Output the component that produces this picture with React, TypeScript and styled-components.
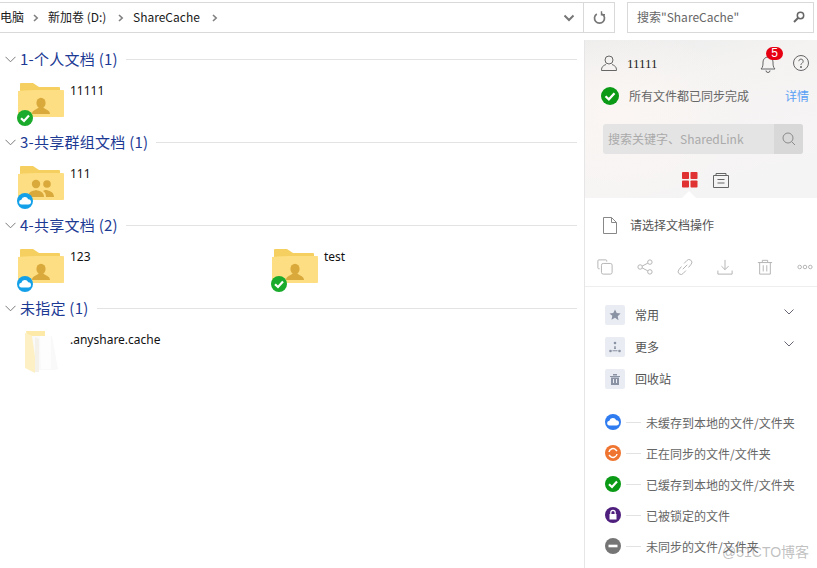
import React from "react";
import styled, { createGlobalStyle } from "styled-components";

const Global = createGlobalStyle`
  html, body { margin: 0; padding: 0; width: 817px; height: 568px; overflow: hidden; background: #fff; }
  body { font-family: "Noto Sans CJK SC", "Noto Sans", sans-serif; }
  * { box-sizing: border-box; }
`;
const CJK = `"Noto Sans CJK SC", "Noto Sans", sans-serif`;
const UI = `"Noto Sans", "Noto Sans CJK SC", sans-serif`;

const Page = styled.div`
  position: relative; width: 817px; height: 568px; overflow: hidden;
  display: flex; flex-direction: column;
`;
const TopBar = styled.div`
  height: 40px; padding-top: 2px; display: flex; align-items: flex-start; flex: none;
`;
const AddressBox = styled.div`
  width: 585px; height: 31px; margin-left: -1px; border: 1px solid #d9d9d9; border-left: none;
  display: flex; align-items: center; font-family: ${CJK}; font-size: 12px; color: #1a1a1a;
  padding: 0 0 2px 1px;
`;
const Crumb = styled.span<{ $w: number }>`
  width: ${p => p.$w}px; flex: none; white-space: nowrap;
`;
const Sep = styled.svg`
  flex: none; width: 6px; height: 8px; margin: 2px 9px 0 0; fill: none; stroke: #808080; stroke-width: 1.6;
`;
const AddressFill = styled.div`flex: 1;`;
const DropBtn = styled.div`
  width: 29px; display: flex; align-items: center; justify-content: center; padding-top: 2px;
`;
const RefreshBtn = styled.div`
  width: 31px; height: 31px; border: 1px solid #d9d9d9; border-left: none; padding-left: 1px;
  display: flex; align-items: center; justify-content: center;
`;
const SearchBox = styled.div`
  margin-left: 12px; width: 187px; height: 31px; border: 1px solid #d9d9d9;
  display: flex; align-items: center; justify-content: space-between; padding: 0 8px 2px 9px;
  font-family: ${CJK}; font-size: 12px; color: #666;
`;
const Body = styled.div`flex: 1; display: flex; min-height: 0;`;
const Left = styled.div`width: 584px; flex: none; display: flex; flex-direction: column; padding-top: 8px;`;
const Group = styled.section`height: 83px; flex: none;`;
const GroupHead = styled.div`
  height: 22px; display: flex; align-items: center; padding: 0 7px 0 5px;
`;
const GroupTitle = styled.span`
  margin: -2px 0 0 4px; font-family: ${CJK}; font-size: 15px; letter-spacing: 0.25px; color: #1c3a94; white-space: nowrap;
`;
const GroupLine = styled.div`flex: 1; height: 1px; background: #e3e3e3; margin-left: 8px;`;
const Items = styled.div`display: flex; padding: 12px 0 0 18px;`;
const Item = styled.div`
  position: relative; width: 254px; height: 46px; display: flex; flex: none;
`;
const ItemName = styled.span`
  margin: 0 0 0 6px; font-family: ${UI}; font-size: 12px; line-height: 16px; color: #111; padding-top: 1px;
`;
const FolderBox = styled.div`position: relative; width: 46px; height: 42px; flex: none;`;
const Badge = styled.div`position: absolute; left: -1px; top: 25px; width: 16px; height: 16px;`;

const Panel = styled.aside`
  width: 233px; flex: none; border-left: 1px solid #e6e6e6; display: flex; flex-direction: column;
`;
const PanelTop = styled.div`
  position: relative; height: 158px; flex: none; padding: 0 8px 0 16px;
  background:
    radial-gradient(130px 90px at 30px 75px, #fbf6f3 0%, rgba(251,246,243,0) 100%),
    linear-gradient(165deg, #ececec 0%, #f4f3f2 30%, #f6f4f4 70%, #f4f4f4 100%);
`;
const UserRow = styled.div`
  height: 40px; padding-top: 6px; display: flex; align-items: center;
`;
const UserName = styled.span`
  margin-left: 10px; font-family: "Liberation Serif", serif; font-size: 13px; color: #222; flex: 1; padding-top: 1px;
`;
const BellWrap = styled.div`position: relative; width: 18px; height: 20px; margin-right: 16px; top: 1px;`;
const BellBadge = styled.span`
  position: absolute; left: 7px; top: -7px; width: 17px; height: 13px; border-radius: 7px;
  background: #e60012; color: #fff; font-family: "Liberation Sans", sans-serif; font-size: 12px; line-height: 13px;
  text-align: center;
`;
const SyncRow = styled.div`
  height: 32px; display: flex; align-items: center; font-family: ${CJK}; font-size: 12px; color: #666;
`;
const SyncText = styled.span`margin: -2px 0 0 10px; flex: 1;`;
const Detail = styled.span`color: #5aa0f5; margin-top: -2px;`;
const PanelSearch = styled.div`
  margin: 12px 0 0 2px; width: 200px; height: 30px; border-radius: 3px; background: #e4e4e4;
  display: flex; align-items: center; font-family: ${CJK}; font-size: 12px; color: #aaa; overflow: hidden;
`;
const PanelSearchText = styled.span`flex: 1; padding: 0 0 2px 5px; white-space: nowrap;`;
const PanelSearchBtn = styled.div`
  width: 29px; height: 100%; background: #d8d8d8; display: flex; align-items: center; justify-content: center;
`;
const Tabs = styled.div`
  display: flex; justify-content: center; gap: 15px; margin: 18px 0 0 0; padding-left: 1px; height: 16px;
`;
const Caret = styled.div`
  position: absolute; left: 97px; bottom: 0; width: 0; height: 0;
  border-left: 7px solid transparent; border-right: 7px solid transparent; border-bottom: 7px solid #fff;
`;
const DocRow = styled.div`
  height: 54px; padding: 0 0 0 18px; display: flex; align-items: center;
  font-family: ${CJK}; font-size: 12px; color: #555;
`;
const DocText = styled.span`margin: -1px 0 0 13px;`;
const Actions = styled.div`
  height: 34px; padding: 0 0 10px 12px; display: flex; gap: 24px; align-items: center;
`;
const ActionSlot = styled.div`width: 16px; height: 16px;`;
const Divider = styled.div`height: 1px; background: #eeeeee;`;
const Menu = styled.div`padding: 18px 0 0 20px; display: flex; flex-direction: column; gap: 12px;`;
const MenuRow = styled.div`
  height: 20px; display: flex; align-items: center; font-family: ${CJK}; font-size: 12px; color: #555;
`;
const MenuIcon = styled.div`
  width: 20px; height: 20px; border-radius: 2px; background: #e9ecf2; flex: none;
  display: flex; align-items: center; justify-content: center;
`;
const MenuLabel = styled.span`margin: -2px 0 0 10px; flex: 1;`;
const MenuChevron = styled.svg`
  width: 10px; height: 6px; margin-right: 23px; margin-top: -6px; fill: none; stroke: #667; stroke-width: 1;
`;
const Legend = styled.div`padding: 25px 0 0 20px; display: flex; flex-direction: column; gap: 15px;`;
const LegendRow = styled.div`
  height: 16px; display: flex; align-items: center; font-family: ${CJK}; font-size: 12px; color: #666; white-space: nowrap;
`;
const LegendDash = styled.div`width: 15px; height: 1px; background: #e2e2e2; margin: 0 5px;`;
const Watermark = styled.div`
  position: absolute; left: 722px; top: 541px; font-family: "Liberation Sans", ${CJK}; font-size: 14px;
  color: rgba(130,130,130,0.5); white-space: nowrap;
`;

const Chevron = () => (
  <svg width="11" height="7" viewBox="0 0 11 7" fill="none" stroke="#7a7a7a" strokeWidth="1"><path d="M.5 .8 5.5 5.8 10.500 .8" /></svg>
);
const Arrow = () => <Sep viewBox="0 0 6 8"><path d="M1 1l3.200 3L1 7" /></Sep>;

type BadgeKind = "check" | "cloud";
const CheckBadge = ({ fill = "#1aab2c" }: { fill?: string }) => (
  <svg viewBox="0 0 16 16" width="16" height="16"><circle cx="8" cy="8" r="8" fill={fill} /><path d="M4 8.200 7 11l5-5.400" fill="none" stroke="#fff" strokeWidth="2.200" /></svg>
);
const CloudBadge = ({ fill = "#14a0e8" }: { fill?: string }) => (
  <svg viewBox="0 0 16 16" width="16" height="16"><circle cx="8" cy="8" r="8" fill={fill} /><path d="M4.600 11.600a2.400 2.400 0 0 1-.2-4.800 3.600 3.600 0 0 1 6.800-.6 2.700 2.700 0 0 1 .2 5.400z" fill="#fff" /></svg>
);

const Person = ({ cx = 23 }: { cx?: number }) => (
  <g fill="#d9a93c">
    <ellipse cx={cx} cy="21" rx="4.600" ry="5.200" />
    <path d={`M${cx - 9} 32c0-4 5-4.500 6.500-6.500h5c1.500 2 6.500 2.500 6.500 6.500z`} />
  </g>
);
const Folder = ({ group }: { group?: boolean }) => (
  <svg viewBox="0 0 46 37" width="46" height="37">
    <path d="M2 2q0-1 1-1h12l6 4h20q1 0 1 1v6H2z" fill="#f5d060" />
    <path d="M0 9q14-1 17-1h28q1 0 1 1v25q0 1-1 1H1q-1 0-1-1z" fill="#fede82" />
    {group ? (
      <g fill="#d9a93c">
        <circle cx="18" cy="19" r="4.200" />
        <circle cx="29" cy="19" r="3.800" />
        <path d="M10 32c0-5 4-6 8-7 4 1 8 2 8 7zM27 25c4 0 9 2 9 7h-8c0-3-1-5-3-6z" />
      </g>
    ) : <Person />}
  </svg>
);
const PlainFolder = () => (
  <svg viewBox="0 0 46 42" width="46" height="42">
    <path d="M8 0h19v5H9z" fill="#fdeaa8" />
    <path d="M7 2l10 4v36L7 37z" fill="#fdf0c4" />
    <path d="M14 5h20l6 33-3 1H19z" fill="#f9f9f9" />
    <path d="M22 5h11v33H23z" fill="#fdfdfd" />
    <path d="M17 6l4 2v33h-4z" fill="#f3f1ea" />
  </svg>
);

const FolderItem = ({ name, badge, group }: { name: string; badge?: BadgeKind; group?: boolean }) => (
  <Item>
    <FolderBox>
      {badge ? <Folder group={group} /> : <PlainFolder />}
      {badge && <Badge>{badge === "check" ? <CheckBadge /> : <CloudBadge />}</Badge>}
    </FolderBox>
    <ItemName>{name}</ItemName>
  </Item>
);

const FileGroup = ({ title, children }: { title: string; children: React.ReactNode }) => (
  <Group>
    <GroupHead>
      <Chevron />
      <GroupTitle>{title}</GroupTitle>
      <GroupLine />
    </GroupHead>
    <Items>{children}</Items>
  </Group>
);

const stroke = { fill: "none", stroke: "#b4b4b4", strokeWidth: 1.100 } as const;

export default function App() {
  return (
    <Page>
      <Global />
      <TopBar>
        <AddressBox>
          <Crumb $w={33}>电脑</Crumb>
          <Arrow />
          <Crumb $w={70}>新加卷 (D:)</Crumb>
          <Arrow />
          <Crumb $w={79}>ShareCache</Crumb>
          <Arrow />
          <AddressFill />
          <DropBtn>
            <svg width="12" height="8" viewBox="0 0 12 8" fill="none" stroke="#777" strokeWidth="2"><path d="M1.500 1.500 6 6l4.500-4.500" /></svg>
          </DropBtn>
        </AddressBox>
        <RefreshBtn>
          <svg width="13" height="14" viewBox="0 0 13 14" fill="none" stroke="#777" strokeWidth="1.700"><path d="M9.200 3a5 5 0 1 1-5.400 0" /><path d="M8.500 .2v3.500h3.500" strokeWidth="1.400" /></svg>
        </RefreshBtn>
        <SearchBox>
          <span>搜索"ShareCache"</span>
          <svg width="12" height="12" viewBox="0 0 12 12" fill="none" stroke="#666"><circle cx="7.500" cy="4.500" r="3.200" strokeWidth="1.500" /><path d="M5 7 1 11" strokeWidth="2" /></svg>
        </SearchBox>
      </TopBar>
      <Body>
        <Left>
          <FileGroup title="1-个人文档 (1)"><FolderItem name="11111" badge="check" /></FileGroup>
          <FileGroup title="3-共享群组文档 (1)"><FolderItem name="111" badge="cloud" group /></FileGroup>
          <FileGroup title="4-共享文档 (2)">
            <FolderItem name="123" badge="cloud" />
            <FolderItem name="test" badge="check" />
          </FileGroup>
          <FileGroup title="未指定 (1)"><FolderItem name=".anyshare.cache" /></FileGroup>
        </Left>
        <Panel>
          <PanelTop>
            <UserRow>
              <svg width="16" height="16" viewBox="0 0 16 16" fill="none" stroke="#666" strokeWidth="1"><circle cx="8" cy="5" r="4" /><path d="M.5 15.500c0-4 2-5 4.500-6M15.500 15.500c0-4-2-5-4.500-6M.5 15.500h15" /></svg>
              <UserName>11111</UserName>
              <BellWrap>
                <svg width="18" height="18" viewBox="0 0 18 18" fill="none" stroke="#666" strokeWidth="1"><path d="M2 14c2-2 2-4 2-7a5 5 0 0 1 10 0c0 3 0 5 2 7z" /><path d="M7 15.500a2 2 0 0 0 4 0" /></svg>
                <BellBadge>5</BellBadge>
              </BellWrap>
              <svg width="16" height="16" viewBox="0 0 16 16" fill="none" stroke="#666"><circle cx="8" cy="8" r="7.500" /><path d="M5.800 6.200a2.200 2.200 0 1 1 3.400 1.900C8.300 8.600 8 9 8 10" /><circle cx="8" cy="12" r=".6" fill="#666" /></svg>
            </UserRow>
            <SyncRow>
              <svg width="18" height="18" viewBox="0 0 16 16"><circle cx="8" cy="8" r="8" fill="#0a9a16" /><path d="M4 8.200 7 11l5-5.400" fill="none" stroke="#fff" strokeWidth="2" /></svg>
              <SyncText>所有文件都已同步完成</SyncText>
              <Detail>详情</Detail>
            </SyncRow>
            <PanelSearch>
              <PanelSearchText>搜索关键字、SharedLink</PanelSearchText>
              <PanelSearchBtn>
                <svg width="14" height="14" viewBox="0 0 14 14" fill="none" stroke="#8a8a8a"><circle cx="6" cy="6" r="5" /><path d="M9.500 9.500 13 13" /></svg>
              </PanelSearchBtn>
            </PanelSearch>
            <Tabs>
              <svg width="16" height="16" viewBox="0 0 16 16" fill="#e03232"><rect width="7" height="7" rx=".8" /><rect x="8.500" width="7" height="7" rx=".8" /><rect y="8.500" width="7" height="7" rx=".8" /><rect x="8.500" y="8.500" width="7" height="7" rx=".8" /></svg>
              <svg width="16" height="16" viewBox="0 0 16 16" fill="none" stroke="#666"><path d="M3 3.500V1.500h10v2M.5 3.500h15v12H.5zM4.500 7.500h7M4.500 11h7" /></svg>
            </Tabs>
            <Caret />
          </PanelTop>
          <DocRow>
            <svg width="14" height="17" viewBox="0 0 14 17" fill="none" stroke="#888"><path d="M.5 .5h8l5 5v11H.5zM8.500 .5v5h5" /></svg>
            <DocText>请选择文档操作</DocText>
          </DocRow>
          <Actions>
            <ActionSlot><svg width="16" height="16" viewBox="0 0 18 18" {...stroke}><path d="M11 3V2q0-1-1-1H2q-1 0-1 1v8q0 1 1 1h1" /><rect x="5" y="5" width="12" height="12" rx="2" /></svg></ActionSlot>
            <ActionSlot><svg width="16" height="16" viewBox="0 0 18 18" {...stroke}><circle cx="3.500" cy="9" r="2.500" /><circle cx="14.500" cy="3.500" r="2.500" /><circle cx="14.500" cy="14.500" r="2.500" /><path d="M5.800 8 12.200 4.600M5.800 10l6.400 3.400" /></svg></ActionSlot>
            <ActionSlot><svg width="16" height="16" viewBox="0 0 18 18" {...stroke}><path d="M8 5l3-3.200a2.800 2.800 0 0 1 5 4L13 9.500M10 13l-3 3.200a2.800 2.800 0 0 1-5-4L5 8.500M6.500 11.500l5-5" /></svg></ActionSlot>
            <ActionSlot><svg width="16" height="16" viewBox="0 0 18 18" {...stroke}><path d="M9 1v11M5 8l4 4 4-4M1 13v4h16v-4" /></svg></ActionSlot>
            <ActionSlot><svg width="16" height="16" viewBox="0 0 18 18" {...stroke}><path d="M1 4h16M6 4V1.500h6V4M3 4v13h12V4M7 7v7M11 7v7" /></svg></ActionSlot>
            <ActionSlot><svg width="16" height="16" viewBox="0 0 18 18" {...stroke}><circle cx="3" cy="9" r="2" /><circle cx="9" cy="9" r="2" /><circle cx="15" cy="9" r="2" /></svg></ActionSlot>
          </Actions>
          <Divider />
          <Menu>
            <MenuRow>
              <MenuIcon><svg width="12" height="12" viewBox="0 0 12 12" fill="#8a93a3"><path d="M6 .5l1.700 3.600 3.900.5-2.900 2.700.8 3.900L6 8.800l-3.500 1.900.8-3.900L.4 4.600l3.900-.5z" /></svg></MenuIcon>
              <MenuLabel>常用</MenuLabel>
              <MenuChevron viewBox="0 0 10 6"><path d="M.5 .5 5 5l4.500-4.500" /></MenuChevron>
            </MenuRow>
            <MenuRow>
              <MenuIcon><svg width="12" height="12" viewBox="0 0 12 12" fill="#8a93a3"><circle cx="6" cy="2" r="1.300" /><circle cx="1.500" cy="10" r="1.300" /><circle cx="10.500" cy="10" r="1.300" /><path d="M5.500 5h1l.5 3H5zM3.500 9.300h5v1h-5z" /></svg></MenuIcon>
              <MenuLabel>更多</MenuLabel>
              <MenuChevron viewBox="0 0 10 6"><path d="M.5 .5 5 5l4.500-4.500" /></MenuChevron>
            </MenuRow>
            <MenuRow>
              <MenuIcon><svg width="10" height="11" viewBox="0 0 10 11" fill="#8a93a3"><path d="M0 2h10v1H0zM3 0h4v1.500H3zM1 3.500h8V11H1z" /><path d="M3.500 5v4M6.500 5v4" stroke="#e9ecf2" /></svg></MenuIcon>
              <MenuLabel>回收站</MenuLabel>
            </MenuRow>
          </Menu>
          <Legend>
            <LegendRow><CloudBadge fill="#2f7bf0" /><LegendDash />未缓存到本地的文件/文件夹</LegendRow>
            <LegendRow>
              <svg width="16" height="16" viewBox="0 0 16 16"><circle cx="8" cy="8" r="8" fill="#ef7430" /><path d="M4 7a4 4 0 0 1 7-2l1 1M12 9a4 4 0 0 1-7 2l-1-1" fill="none" stroke="#fff" strokeWidth="1.500" /></svg>
              <LegendDash />正在同步的文件/文件夹
            </LegendRow>
            <LegendRow><CheckBadge fill="#0a9a16" /><LegendDash />已缓存到本地的文件/文件夹</LegendRow>
            <LegendRow>
              <svg width="16" height="16" viewBox="0 0 16 16"><circle cx="8" cy="8" r="8" fill="#4f1f7d" /><rect x="4.500" y="7" width="7" height="5.500" fill="#fff" /><path d="M5.800 7V5.500a2.200 2.200 0 0 1 4.400 0V7" fill="none" stroke="#fff" strokeWidth="1.200" /></svg>
              <LegendDash />已被锁定的文件
            </LegendRow>
            <LegendRow>
              <svg width="16" height="16" viewBox="0 0 16 16"><circle cx="8" cy="8" r="8" fill="#757575" /><rect x="3.500" y="6.700" width="9" height="2.600" fill="#fff" /></svg>
              <LegendDash />未同步的文件/文件夹
            </LegendRow>
          </Legend>
        </Panel>
      </Body>
      <Watermark>@51CTO博客</Watermark>
    </Page>
  );
}
